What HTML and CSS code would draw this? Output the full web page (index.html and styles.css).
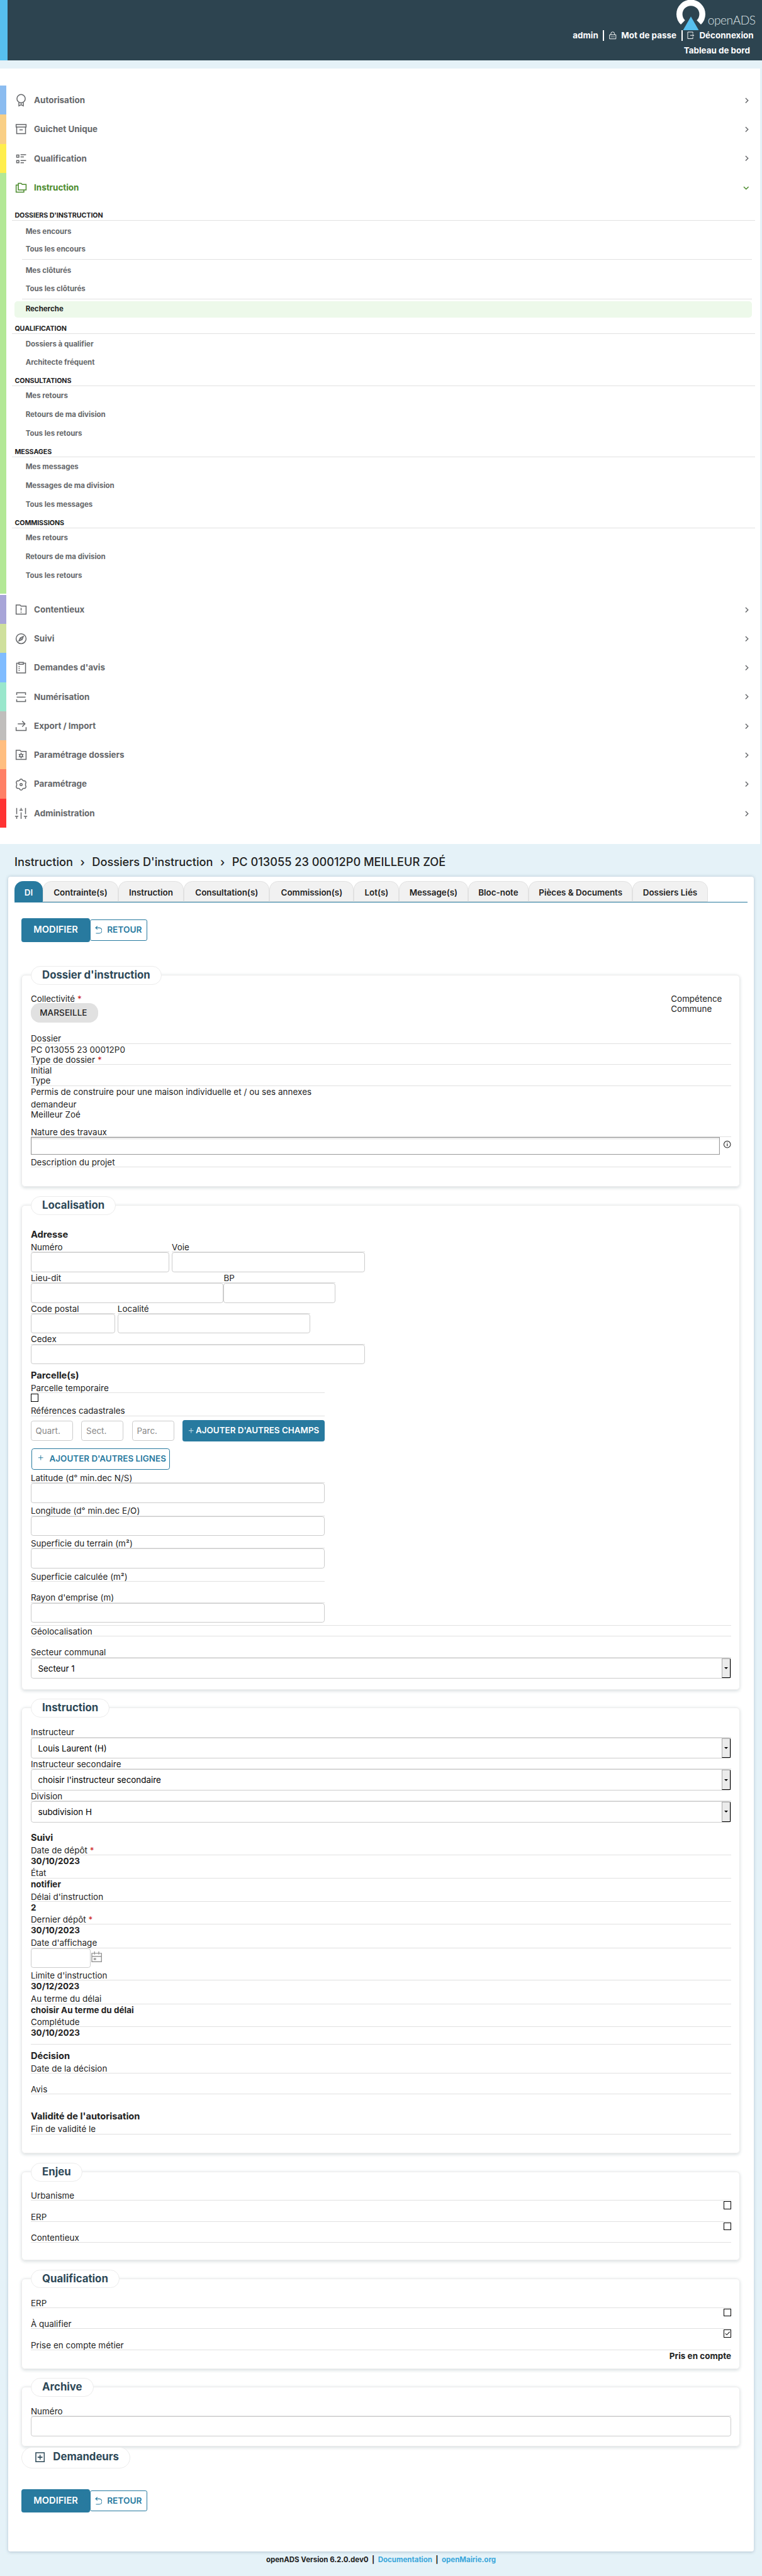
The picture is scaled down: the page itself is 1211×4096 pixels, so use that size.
FILE: index.html
```html
<!DOCTYPE html>
<html lang="fr">
<head>
<meta charset="utf-8">
<title>openADS</title>
<link rel="stylesheet" href="styles.css">
</head>
<body>
<header class="header">
  <div class="logo">
    <svg width="48" height="50" viewBox="0 0 48 50"><path d="M10.800 37.200A19 19 0 1 1 37.200 37.200" fill="none" stroke="#fff" stroke-width="10"/><path d="M24 27.500L37 50H11z" fill="#57bfee"/></svg>
    <span class="logo-text">openADS</span>
  </div>
  <nav class="actions">
    <span>admin</span><i class="bar"></i>
    <svg class="ic12" viewBox="0 0 12 13"><path d="M.7 5.500h10.600v6.800H.7zM3 5.500V3.800a3 3 0 0 1 6 0v1.700M3 9h1.500M5.300 9h1.500M7.600 9h1.500" fill="none" stroke="#fff"/></svg>
    <span>Mot de passe</span><i class="bar"></i>
    <svg class="ic12" viewBox="0 0 12 13"><path d="M9.500 3.500V1H1v11h8.500V9.500M5 6.500h6M9 4.500l2 2-2 2" fill="none" stroke="#fff"/></svg>
    <span>Déconnexion</span>
  </nav>
  <div class="shortcut">Tableau de bord</div>
</header>

<nav class="menu">
  <div class="item c1"><svg class="ic" viewBox="0 0 24 24"><circle cx="12" cy="9" r="7.500"/><path d="M8 15.500V22l4-2 4 2v-6.500M12 17v3"/></svg><span>Autorisation</span><svg class="chev" viewBox="0 0 8 10"><path d="M2 1l4 4-4 4"/></svg></div>
  <div class="item c2"><svg class="ic" viewBox="0 0 24 24"><path d="M3 3.500h18V8H3zM4 8v12h16V8M9 13h6"/></svg><span>Guichet Unique</span><svg class="chev" viewBox="0 0 8 10"><path d="M2 1l4 4-4 4"/></svg></div>
  <div class="item c3"><svg class="ic" viewBox="0 0 24 24"><path d="M4 5h4v4H4zM4 15h4v4H4zM11 4.500h10M11 8.500h6M11 15h10M11 19h6"/></svg><span>Qualification</span><svg class="chev" viewBox="0 0 8 10"><path d="M2 1l4 4-4 4"/></svg></div>
  <div class="item c4 open"><svg class="ic" viewBox="0 0 24 24"><path d="M7 4h5l2 2h7v10H7zM7 7H3v13h14v-4"/></svg><span>Instruction</span><svg class="chev down" viewBox="0 0 10 8"><path d="M1 2l4 4 4-4"/></svg></div>
  <div class="submenu">
    <h3>DOSSIERS D'INSTRUCTION</h3>
    <ul><li>Mes encours</li><li>Tous les encours</li><li class="rule"></li><li>Mes clôturés</li><li>Tous les clôturés</li><li class="rule last"></li><li class="current">Recherche</li></ul>
    <h3 class="after-current">QUALIFICATION</h3>
    <ul class="pair"><li>Dossiers à qualifier</li><li>Architecte fréquent</li></ul>
    <h3 class="after-pair">CONSULTATIONS</h3>
    <ul class="loose"><li>Mes retours</li><li>Retours de ma division</li><li>Tous les retours</li></ul>
    <h3>MESSAGES</h3>
    <ul class="loose"><li>Mes messages</li><li>Messages de ma division</li><li>Tous les messages</li></ul>
    <h3>COMMISSIONS</h3>
    <ul class="loose"><li>Mes retours</li><li>Retours de ma division</li><li>Tous les retours</li></ul>
  </div>
  <div class="item c5"><svg class="ic" viewBox="0 0 24 24"><path d="M3 3.500h7l2 2h9V20H3zM12 8.500v5M12 15.500v2"/></svg><span>Contentieux</span><svg class="chev" viewBox="0 0 8 10"><path d="M2 1l4 4-4 4"/></svg></div>
  <div class="item c6"><svg class="ic" viewBox="0 0 24 24"><circle cx="12" cy="12" r="9"/><path d="M16 8l-2 5.500L8 16l2.500-5.500zM11 13l2-2"/></svg><span>Suivi</span><svg class="chev" viewBox="0 0 8 10"><path d="M2 1l4 4-4 4"/></svg></div>
  <div class="item c7"><svg class="ic" viewBox="0 0 24 24"><path d="M8 4H4v17.500h16V4h-4M8 2.500h8V6H8zM7.500 10h2M7.500 13.500h2M7.500 17h2"/></svg><span>Demandes d'avis</span><svg class="chev" viewBox="0 0 8 10"><path d="M2 1l4 4-4 4"/></svg></div>
  <div class="item c8"><svg class="ic" viewBox="0 0 24 24"><path d="M4 8V4h16v4M4 12h16M4 16v4h16v-4"/></svg><span>Numérisation</span><svg class="chev" viewBox="0 0 8 10"><path d="M2 1l4 4-4 4"/></svg></div>
  <div class="item c9"><svg class="ic" viewBox="0 0 24 24"><path d="M3 14v6h18v-6M6 8h13M14 3l5 5-5 5"/></svg><span>Export / Import</span><svg class="chev" viewBox="0 0 8 10"><path d="M2 1l4 4-4 4"/></svg></div>
  <div class="item c10"><svg class="ic" viewBox="0 0 24 24"><path d="M3 3.500h7l2 2h9V20H3zM12 8v2.500M12 15v3M7.800 10.500l2.200 1.200M14 14.300l2.200 1.200M7.800 15.500l2.200-1.200M14 11.700l2.200-1.200"/><circle cx="12" cy="13" r="2.500"/></svg><span>Paramétrage dossiers</span><svg class="chev" viewBox="0 0 8 10"><path d="M2 1l4 4-4 4"/></svg></div>
  <div class="item c11"><svg class="ic" viewBox="0 0 24 24"><path d="M10 3q2-2 4 0l1 1.500 2 .8 2-.1q2 1.200 1.800 3.500L20 10.500v3l.8 1.800q.2 2.300-1.800 3.500l-2-.1-2 .8-1 1.500q-2 2-4 0l-1-1.500-2-.8-2 .1q-2-1.200-1.800-3.500L4 13.500v-3l-.8-1.800Q3 6.400 5 5.200l2 .1 2-.8z"/><circle cx="12" cy="12" r="2"/></svg><span>Paramétrage</span><svg class="chev" viewBox="0 0 8 10"><path d="M2 1l4 4-4 4"/></svg></div>
  <div class="item c12"><svg class="ic" viewBox="0 0 24 24"><path d="M4 2v11M1 17h6M4 17v4.500M12 2v4M9 6h6M12 10v11.500M20 2v11M17 17h6M20 17v4.500"/></svg><span>Administration</span><svg class="chev" viewBox="0 0 8 10"><path d="M2 1l4 4-4 4"/></svg></div>
</nav>

<h1 class="crumbs"><span>Instruction</span><i>›</i><span>Dossiers D'instruction</span><i>›</i><span>PC 013055 23 00012P0 MEILLEUR ZOÉ</span></h1>

<main class="panel">
  <div class="tabs">
    <a class="on t1">DI</a><a class="t2">Contrainte(s)</a><a class="t3">Instruction</a><a class="t4">Consultation(s)</a><a class="t5">Commission(s)</a><a class="t6">Lot(s)</a><a class="t7">Message(s)</a><a class="t8">Bloc-note</a><a class="t9">Pièces &amp; Documents</a><a class="t10">Dossiers Liés</a>
  </div>
  <div class="buttons top">
    <a class="primary">MODIFIER</a>
    <a class="back"><svg width="12" height="14" viewBox="0 0 12 14"><path d="M4 .8L1 3.500l3 2.700M1 3.500h6a4.200 4.200 0 0 1 0 9H1.500" fill="none" stroke="#287a9f" stroke-width="1.200"/></svg>RETOUR</a>
  </div>

  <section class="box s1">
    <h2>Dossier d'instruction</h2>
    <div class="cols mt15">
      <div><div class="plain">Collectivité <b class="req">*</b></div><div class="chip">MARSEILLE</div></div>
      <div class="comp"><div>Compétence</div><div>Commune</div></div>
    </div>
    <label class="mt18">Dossier</label><p>PC 013055 23 00012P0</p>
    <label>Type de dossier <b class="req">*</b></label><p>Initial</p>
    <label>Type</label><p>Permis de construire pour une maison individuelle et / ou ses annexes</p>
    <label class="fit mt4">demandeur</label><p class="tight">Meilleur Zoé</p>
    <label class="mt12">Nature des travaux</label>
    <div class="nature"><input class="sunk"><svg width="14" height="14" viewBox="0 0 14 14"><circle cx="7" cy="7" r="5.500" fill="none" stroke="#333" stroke-width="1.200"/><path d="M7 6v4M7 3.800v1.200" stroke="#333" stroke-width="1.400"/></svg></div>
    <label class="mt4">Description du projet</label>
  </section>

  <section class="box s2">
    <h2>Localisation</h2>
    <h4 class="mt23">Adresse</h4>
    <div class="cols start mt4 g4"><div class="w230"><label>Numéro</label><input></div><div class="w320"><label>Voie</label><input></div></div>
    <div class="cols start mt1"><div class="w320"><label>Lieu-dit</label><input></div><div class="w185"><label>BP</label><input></div></div>
    <div class="cols start mt1 g4"><div class="w140"><label>Code postal</label><input></div><div class="w320"><label>Localité</label><input></div></div>
    <div class="w554 mt1"><label>Cedex</label><input></div>
    <h4 class="mt9">Parcelle(s)</h4>
    <div class="half">
      <label class="mt4">Parcelle temporaire</label><span class="check"></span>
      <label class="mt7">Références cadastrales</label>
      <div class="refs"><input placeholder="Quart."><input placeholder="Sect."><input placeholder="Parc."><a class="add"><svg width="10" height="10" viewBox="0 0 10 10"><path d="M5 1v8M1 5h8" stroke="#d5e6ee"/></svg>AJOUTER D'AUTRES CHAMPS</a></div>
      <a class="add-line"><svg width="10" height="10" viewBox="0 0 10 10"><path d="M5 1v8M1 5h8" stroke="#287a9f"/></svg>AJOUTER D'AUTRES LIGNES</a>
      <label class="mt5">Latitude (d° min.dec N/S)</label><input>
      <label class="mt5">Longitude (d° min.dec E/O)</label><input>
      <label class="mt4">Superficie du terrain (m²)</label><input>
      <label class="mt5">Superficie calculée (m²)</label>
      <label class="mt18">Rayon d'emprise (m)</label><input>
    </div>
    <hr class="mt4">
    <label class="mt1">Géolocalisation</label>
    <label class="mt18">Secteur communal</label>
    <div class="select">Secteur 1<i></i></div>
  </section>

  <section class="box s3">
    <h2>Instruction</h2>
    <label class="mt16">Instructeur</label><div class="select">Louis Laurent (H)<i></i></div>
    <label class="mt1">Instructeur secondaire</label><div class="select">choisir l'instructeur secondaire<i></i></div>
    <label class="mt1">Division</label><div class="select">subdivision H<i></i></div>
    <h4 class="mt16">Suivi</h4>
    <div class="strong">
      <label class="mt4">Date de dépôt <b class="req">*</b></label><p>30/10/2023</p>
      <label class="mt3">État</label><p>notifier</p>
      <label class="mt4">Délai d'instruction</label><p>2</p>
      <label class="mt3">Dernier dépôt <b class="req">*</b></label><p>30/10/2023</p>
      <label class="mt4">Date d'affichage</label>
      <div class="date"><input><svg width="18" height="18" viewBox="0 0 18 18"><path d="M1 3h16v14H1zM1 8h16M5.500 0v5M12.500 0v5" fill="none" stroke="#999" stroke-width="1.500"/><path d="M4 11h4v3H4z" fill="#999"/></svg></div>
      <label class="mt4">Limite d'instruction</label><p>30/12/2023</p>
      <label class="mt4">Au terme du délai</label><p>choisir Au terme du délai</p>
      <label class="mt3">Complétude</label><p>30/10/2023</p>
    </div>
    <hr class="mt10">
    <h4 class="mt9">Décision</h4>
    <label class="mt4">Date de la décision</label>
    <label class="mt18">Avis</label>
    <h4 class="mt27">Validité de l'autorisation</h4>
    <label class="mt4">Fin de validité le</label>
  </section>

  <section class="box s4">
    <h2>Enjeu</h2>
    <label class="mt15">Urbanisme</label><div class="right"><span class="check"></span></div>
    <label>ERP</label><div class="right"><span class="check"></span></div>
    <label>Contentieux</label>
  </section>

  <section class="box s5">
    <h2>Qualification</h2>
    <label class="mt16">ERP</label><div class="right"><span class="check"></span></div>
    <label>À qualifier</label><div class="right"><span class="check"><svg width="9" height="7" viewBox="0 0 9 7"><path d="M.7 3.500l2.500 2.300L8 .8" fill="none" stroke="#222" stroke-width="1.200"/></svg></span></div>
    <label>Prise en compte métier</label><div class="right strong"><p>Pris en compte</p></div>
  </section>

  <section class="box s6">
    <h2>Archive</h2>
    <label class="mt16">Numéro</label><input>
  </section>
  <h2 class="folded"><svg width="16" height="17" viewBox="0 0 16 17"><path d="M1 1h14v15H1zM4 8.500h8M8 4.500v8" fill="none" stroke="#2d4857" stroke-width="1.600"/></svg>Demandeurs</h2>
  <div class="buttons bottom">
    <a class="primary">MODIFIER</a>
    <a class="back"><svg width="12" height="14" viewBox="0 0 12 14"><path d="M4 .8L1 3.500l3 2.700M1 3.500h6a4.200 4.200 0 0 1 0 9H1.500" fill="none" stroke="#287a9f" stroke-width="1.200"/></svg>RETOUR</a>
  </div>
</main>
<footer>openADS Version 6.2.0.dev0 &nbsp;|&nbsp; <a>Documentation</a> &nbsp;|&nbsp; <a>openMairie.org</a></footer>
</body>
</html>
```
FILE: styles.css
```css
* { box-sizing: border-box; }
html { zoom: 0.9582; background: #e5f2f8; }
body { margin: 0; font: 14px/16px Inter, "Liberation Sans", sans-serif; color: #222; background: #e5f2f8; }
h1, h2, h3, h4, p, ul, hr { margin: 0; padding: 0; }
svg { display: block; flex: none; }
i { font-style: normal; }

.header { height: 100px; background: #2d4450; border-left: 13px solid #57bfee; color: #fff; font-weight: 700; display: flex; flex-direction: column; align-items: flex-end; padding-right: 14px; }
.logo { display: flex; height: 50px; gap: 4px; }
.logo-text { font: 300 20px/24px Lato, sans-serif; letter-spacing: -0.5px; margin-top: 21px; color: #dfe5e8; width: 76px; white-space: nowrap; }
.actions { display: flex; align-items: center; height: 18px; gap: 8px; }
.bar { width: 2.1px; height: 17px; background: #fff; }
.ic12 { width: 12px; height: 13px; }
.shortcut { margin: 8px 6px 0 0; }

.menu { background: #fff; margin: 14px 3px 0 0; height: 1287px; padding-top: 28px; }
.item { height: 48.300px; display: flex; align-items: center; padding: 1px 18px 0 14px; border-left: 11px solid; color: #65676a; font-weight: 700; }
.item span { flex: 1; margin-left: 10px; color: #65676a; }
.ic { width: 22px; height: 22px; fill: none; stroke: #65676a; stroke-width: 1.700; }
.chev { width: 8px; height: 10px; fill: none; stroke: #65676a; stroke-width: 1.500; }
.chev.down { width: 10px; height: 8px; stroke: #4a8a2c; }
.item.open span { color: #4a8a2c; }
.open .ic { stroke: #4a8a2c; }
.c1 { border-color: #8bbcf0; }
.c2 { border-color: #f9cf85; }
.c3 { border-color: #ffee4d; }
.c4 { border-color: #b3e896; }
.c5 { border-color: #a8a5d8; }
.c6 { border-color: #cfe09d; }
.c7 { border-color: #7fbcff; }
.c8 { border-color: #9ae7cc; }
.c9 { border-color: #c0bebc; }
.c10 { border-color: #ffbe80; }
.c11 { border-color: #ff8066; }
.c12 { border-color: #ff3333; }
.submenu { border-left: 11px solid #b3e896; height: 650px; margin-bottom: 2px; padding: 14px 9px 0; }
.submenu h3 { font: 700 11.200px/17px Inter, sans-serif; height: 17px; color: #222; padding: 0 5px; border-bottom: 1px solid #e1e1e1; margin-top: 7px; letter-spacing: -0.1px; }
.submenu h3:first-child { margin-top: 0; }
.submenu h3.after-current { margin-top: 10px; }
.submenu h3.after-pair { margin-top: 8px; }
.submenu ul { list-style: none; font: 700 12px/30px Inter, sans-serif; color: #65676a; padding: 3px 5px 0; }
.submenu li { padding-left: 18px; }
.submenu .pair { padding-top: 2px; }
.submenu .loose { line-height: 31px; padding-top: 1px; }
.submenu .rule { height: 1px; margin: 1px 0 3px 12px; background: #e1e1e1; padding: 0; }
.submenu .rule.last { margin-top: 2px; }
.submenu .current { line-height: 27px; background: #edf9ea; border-radius: 5px; color: #222; }

.crumbs { font: 500 19px/24px Inter, sans-serif; height: 54px; padding: 17px 0 0 24px; display: flex; gap: 12px; white-space: nowrap; }

.panel { background: #fff; margin: 0 14px; height: 2779px; border-radius: 4px; box-shadow: 0 1px 5px rgba(60, 90, 120, .3); padding: 7px 10px 0; }
.tabs { display: flex; border-bottom: 2px solid #287a9f; height: 36px; font: 600 14px/36px Inter, sans-serif; }
.tabs a { background: #f1f1f1; border: 1px solid #e1e1e1; border-radius: 14px 14px 0 0; text-align: center; white-space: nowrap; }
.tabs .on { background: #287a9f; border-color: #287a9f; color: #fff; }
.t1 { width: 47px; } .t2 { width: 125px; } .t3 { width: 109px; } .t4 { width: 142px; } .t5 { width: 140px; }
.t6 { width: 75px; } .t7 { width: 114px; } .t8 { width: 101px; } .t9 { width: 172px; } .t10 { width: 125px; }
.buttons { display: flex; align-items: center; margin-left: 12px; font-weight: 600; }
.buttons.top { margin-top: 26px; margin-bottom: 55px; height: 39px; }
.buttons.bottom { margin-top: 35px; height: 38px; }
.primary { width: 113px; height: 100%; background: #287a9f; color: #fff; border-radius: 4px; display: flex; align-items: center; justify-content: center; font-size: 15.300px; }
.back { width: 95px; height: 35px; border: 1px solid #287a9f; border-radius: 3px; color: #287a9f; display: flex; align-items: center; justify-content: center; gap: 8px; font-size: 14.300px; }

.box { margin: 0 13px 30px 12px; border: 1px solid #ececec; border-radius: 6px; box-shadow: 0 2px 5px rgba(60, 90, 100, .2); padding: 0 13px 0 14px; }
.s1 { height: 351px; margin-bottom: 31px; }
.s2 { height: 804px; }
.s3 { height: 739px; margin-bottom: 31px; }
.s4 { height: 147px; }
.s5 { height: 150px; }
.s6 { height: 99px; margin-bottom: 1px; }
h2 { font: 700 17.500px/29px Inter, sans-serif; color: #2d4857; background: #fff; border: 1px solid #ececec; border-radius: 16px; width: max-content; padding: 0 18px; }
.box h2 { margin-top: -16px; }
h2.folded { position: relative; margin-left: 12px; height: 35px; display: flex; gap: 14px; align-items: center; padding: 0 18px 2px 21px; border-radius: 18px; }
h4 { font: 700 15.300px/19px Inter, sans-serif; height: 18px; }
label { display: block; height: 17px; line-height: 18px; letter-spacing: 0.05px; border-bottom: 1px solid #e1e1e1; white-space: nowrap; }
label.fit { width: max-content; }
p { height: 18px; line-height: 19px; letter-spacing: 0.05px; }
p.tight { height: 17px; line-height: 18px; }
.strong p { font-weight: 700; }
.req { color: #c22; font-weight: 400; }
.plain { height: 16px; line-height: 18px; }
.chip { background: #e1e1e1; border-radius: 15px; height: 32px; line-height: 33px; width: 112px; padding-left: 15px; font-weight: 500; letter-spacing: 0.15px; }
.cols { display: flex; justify-content: space-between; }
.cols.start { justify-content: flex-start; }
.comp { width: 100px; line-height: 17px; }
input { display: block; width: 100%; height: 33px; border: 1px solid #ccc; border-radius: 4px; background: #fff; padding: 0 7px; font: 14px Inter, sans-serif; margin: 0; }
input::placeholder { color: #888; }
.nature { display: flex; align-items: center; gap: 5px; }
.nature input { width: 1143px; height: 29px; border-color: #999; border-radius: 0; box-shadow: inset 0 2px 3px #e5e5e5; }
.nature svg { margin-bottom: 5px; }
.check { display: block; width: 13px; height: 13px; border: 1px solid #000; margin-top: 1px; background: #fff; padding: 2px 1px; }
.right { height: 18px; display: flex; justify-content: flex-end; }
.half { width: 488px; }
.refs { display: flex; gap: 14px; align-items: center; margin-top: 7px; height: 35px; }
.refs input { width: 70px; }
.add { flex: 1; height: 35px; background: #287a9f; color: #fff; font-weight: 600; border-radius: 4px; display: flex; align-items: center; justify-content: center; gap: 2px; white-space: nowrap; }
.add-line { margin: 12px 0 0 1px; width: 230px; height: 35px; border: 1px solid #287a9f; color: #287a9f; font-weight: 600; border-radius: 4px; display: flex; align-items: center; gap: 9px; padding-left: 10px; white-space: nowrap; }
.add-line svg { margin-bottom: 4px; }
hr { border: 0; height: 1px; background: #e1e1e1; }
.select { height: 35px; border: 1px solid #ccc; border-radius: 4px; padding-left: 11px; line-height: 34px; color: #000; display: flex; justify-content: space-between; }
.select i { width: 15px; height: 33px; background: #ebebeb; border: 2px outset #aaa; border-right-color: #555; border-bottom-color: #555; display: flex; align-items: center; justify-content: center; }
.select i::after { content: ""; border: 4px solid transparent; border-top-color: #000; border-bottom: 0; }
.date { display: flex; gap: 1px; align-items: center; }
.date input { width: 99px; }
.date svg { margin-bottom: 3px; }
.w140 { width: 140px; } .w185 { width: 185px; } .w230 { width: 230px; } .w320 { width: 320px; } .w554 { width: 554px; }
.g4 { gap: 4px; }
.mt1 { margin-top: 1px; } .mt3 { margin-top: 3px; } .mt4 { margin-top: 4px; } .mt5 { margin-top: 5px; } .mt7 { margin-top: 7px; } .mt9 { margin-top: 9px; }
.mt10 { margin-top: 10px; } .mt12 { margin-top: 12px; } .mt15 { margin-top: 15px; } .mt16 { margin-top: 16px; } .mt18 { margin-top: 18px; } .mt23 { margin-top: 23px; } .mt27 { margin-top: 27px; }

footer { margin-top: 5px; text-align: center; font-size: 12px; font-weight: 700; line-height: 18px; }
footer a { color: #3ba7db; }
```
